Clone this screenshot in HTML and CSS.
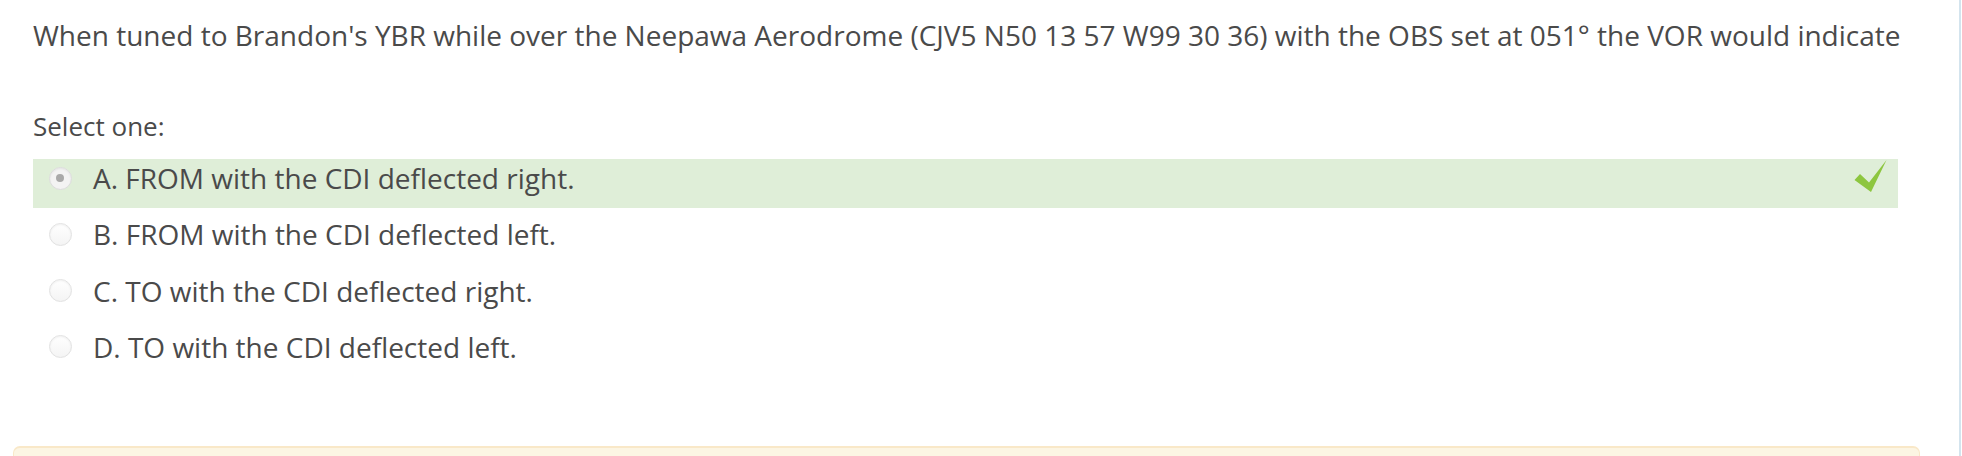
FILE: index.html
```html
<!DOCTYPE html>
<html lang="en">
<head>
<meta charset="utf-8">
<title>Question</title>
<link rel="stylesheet" href="styles.css">
</head>
<body>
<div class="page">
  <div class="que">
    <div class="qtext">When tuned to Brandon's YBR while over the Neepawa Aerodrome (CJV5 N50 13 57 W99 30 36) with the OBS set at 051° the VOR would indicate</div>
    <div class="ablock">
      <div class="prompt">Select one:</div>
      <div class="answer">
        <div class="opt correct">
          <span class="radio checked"><span class="dot"></span></span>
          <span class="label">A. FROM with the CDI deflected right.</span>
          <svg class="tick" width="34" height="34" viewBox="0 0 34 34" aria-hidden="true"><polygon points="1.5,21 7,15 16,23.5 33.5,1 18,33" fill="#8dc63f"/></svg>
        </div>
        <div class="opt">
          <span class="radio"></span>
          <span class="label">B. FROM with the CDI deflected left.</span>
        </div>
        <div class="opt">
          <span class="radio"></span>
          <span class="label">C. TO with the CDI deflected right.</span>
        </div>
        <div class="opt">
          <span class="radio"></span>
          <span class="label">D. TO with the CDI deflected left.</span>
        </div>
      </div>
    </div>
  </div>
  <div class="outcome"></div>
</div>
</body>
</html>
```
FILE: styles.css
```css
html, body {
  margin: 0;
  padding: 0;
  background: #fff;
}

body {
  font-family: "Open Sans", "Liberation Sans", sans-serif;
  color: #4a4a4a;
  overflow: hidden;
}

.page {
  width: 1961px;
  height: 456px;
  overflow: hidden;
  box-sizing: border-box;
  border-right: 2px solid #d3e4ee;
  display: flex;
  flex-direction: column;
}

.que {
  padding: 14px 61px 0 33px;
}

.qtext {
  font-size: 28px;
  line-height: 42px;
  margin-right: -40px;
  white-space: nowrap;
}

.ablock {
  margin-top: 52px;
}

.prompt {
  font-size: 26px;
  line-height: 36px;
  margin-bottom: 15px;
}

.answer {
  display: flex;
  flex-direction: column;
  gap: 7.3px;
}

.opt {
  display: flex;
  align-items: flex-start;
  height: 49px;
  font-size: 28px;
  line-height: 38px;
}

.opt.correct {
  background: #dfeed8;
}

.radio {
  flex: none;
  box-sizing: border-box;
  width: 23px;
  height: 23px;
  margin: 7.5px 21.5px 0 15.5px;
  border-radius: 50%;
  border: 1px solid #e2e2e2;
  background: linear-gradient(#ffffff, #f4f4f4);
  box-shadow: inset 0 1px 2px rgba(0, 0, 0, 0.06);
  display: flex;
  align-items: center;
  justify-content: center;
}

.radio.checked {
  background: #f3f3f3;
  border-color: #dcdcdc;
}

.dot {
  width: 8px;
  height: 8px;
  border-radius: 50%;
  background: #a9a9a9;
}

.label {
  white-space: nowrap;
}

.tick {
  margin-left: auto;
  margin-right: 11px;
  margin-top: 0;
  flex: none;
}

.outcome {
  flex: none;
  margin: 69px 39px 0 13px;
  height: 40px;
  background: #fcf5e3;
  border: 1px solid #f9e8c8;
  border-top-width: 2px;
  border-radius: 7px;
}
```
